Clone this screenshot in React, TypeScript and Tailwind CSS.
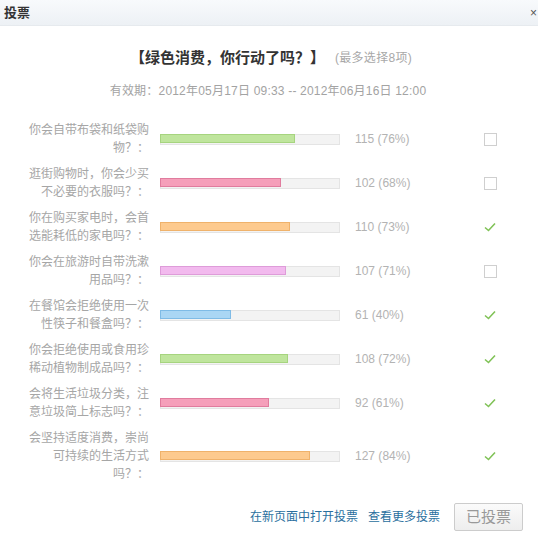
import React from 'react';

type Option = {
  label: string;
  count: number;
  percent: number;
  color: string;
  voted: boolean;
};

const options: Option[] = [
  { label: '你会自带布袋和纸袋购物？：', count: 115, percent: 76, color: 'bg-[#bfe59d] border-[#a6d47f]', voted: false },
  { label: '逛街购物时，你会少买不必要的衣服吗？：', count: 102, percent: 68, color: 'bg-[#f59fba] border-[#e07c9e]', voted: false },
  { label: '你在购买家电时，会首选能耗低的家电吗？：', count: 110, percent: 73, color: 'bg-[#fdca8e] border-[#efb26b]', voted: true },
  { label: '你会在旅游时自带洗漱用品吗？：', count: 107, percent: 71, color: 'bg-[#f2baee] border-[#de9cd9]', voted: false },
  { label: '在餐馆会拒绝使用一次性筷子和餐盒吗？：', count: 61, percent: 40, color: 'bg-[#aad6f4] border-[#7fbbe6]', voted: true },
  { label: '你会拒绝使用或食用珍稀动植物制成品吗？：', count: 108, percent: 72, color: 'bg-[#bfe59d] border-[#a6d47f]', voted: true },
  { label: '会将生活垃圾分类，注意垃圾简上标志吗？：', count: 92, percent: 61, color: 'bg-[#f59fba] border-[#e07c9e]', voted: true },
  { label: '会坚持适度消费，崇尚可持续的生活方式吗？：', count: 127, percent: 84, color: 'bg-[#fdca8e] border-[#efb26b]', voted: true },
];

const font = { fontFamily: '"Liberation Sans", "Noto Sans CJK SC", sans-serif' };

const App: React.FC = () => {
  return (
    <div className="w-[538px] h-[540px] bg-white overflow-hidden text-[12px]" style={font}>
      {/* HEADER */}
      <div className="h-[26px] flex items-center justify-between pl-[4px] bg-gradient-to-b from-[#f8fafc] to-[#edf1f5] border-b border-[#e6eaee] overflow-hidden">
        <span className="font-bold text-[13px] text-[#333]">投票</span>
        <span className="text-[12px] text-[#555] mr-[1px]">×</span>
      </div>

      {/* TITLE */}
      <div className="mt-[22px] h-[20px] flex items-center justify-center pl-[4px]">
        <span className="font-bold text-[15px] text-[#333]">【绿色消费，你行动了吗？】</span>
        <span className="ml-[10px] text-[#a8a8a8] tracking-[0.3px]">(最多选择8项)</span>
      </div>

      {/* VALIDITY */}
      <div className="mt-[14px] h-[18px] leading-[18px] text-center text-[#a3a3a3] tracking-[0.2px] pr-[2px]">
        有效期：2012年05月17日 09:33 -- 2012年06月16日 12:00
      </div>

      {/* OPTIONS */}
      <div className="mt-[21px] pl-[29px] flex flex-col gap-[8px]">
        {options.map((opt) => (
          <div key={opt.label} className="flex items-center">
            <div className="w-[120px] text-right leading-[18px] text-[#a6a6a6] break-all">{opt.label}</div>
            <div className="ml-[11px] w-[180px] h-[11px] bg-[#f3f3f3] border border-[#e4e4e4] flex">
              <div className={`h-full border ${opt.color} -m-[1px]`} style={{ width: `${opt.percent}%` }} />
            </div>
            <div className="ml-[15px] w-[110px] text-[#b3b3b3]">
              {opt.count} ({opt.percent}%)
            </div>
            <div className="w-[50px] flex justify-center">
              {opt.voted ? (
                <svg width="12" height="10" viewBox="0 0 12 10" fill="none">
                  <path d="M1 5.5 L4.5 8.5 L11 1.5" stroke="#80c257" strokeWidth="1.6" />
                </svg>
              ) : (
                <div className="w-[13px] h-[13px] border border-[#cfcfcf] bg-white" />
              )}
            </div>
          </div>
        ))}
      </div>

      {/* FOOTER */}
      <div className="mt-[20px] flex items-center justify-end pr-[15px]">
        <a className="text-[#2a6f9e] cursor-pointer">在新页面中打开投票</a>
        <a className="ml-[10px] text-[#2a6f9e] cursor-pointer">查看更多投票</a>
        <button className="ml-[14px] w-[69px] h-[28px] border border-[#cccccc] rounded-[2px] bg-gradient-to-b from-[#fbfbfb] to-[#eeeeee] text-[15px] text-[#999]">
          已投票
        </button>
      </div>
    </div>
  );
};

export default App;
